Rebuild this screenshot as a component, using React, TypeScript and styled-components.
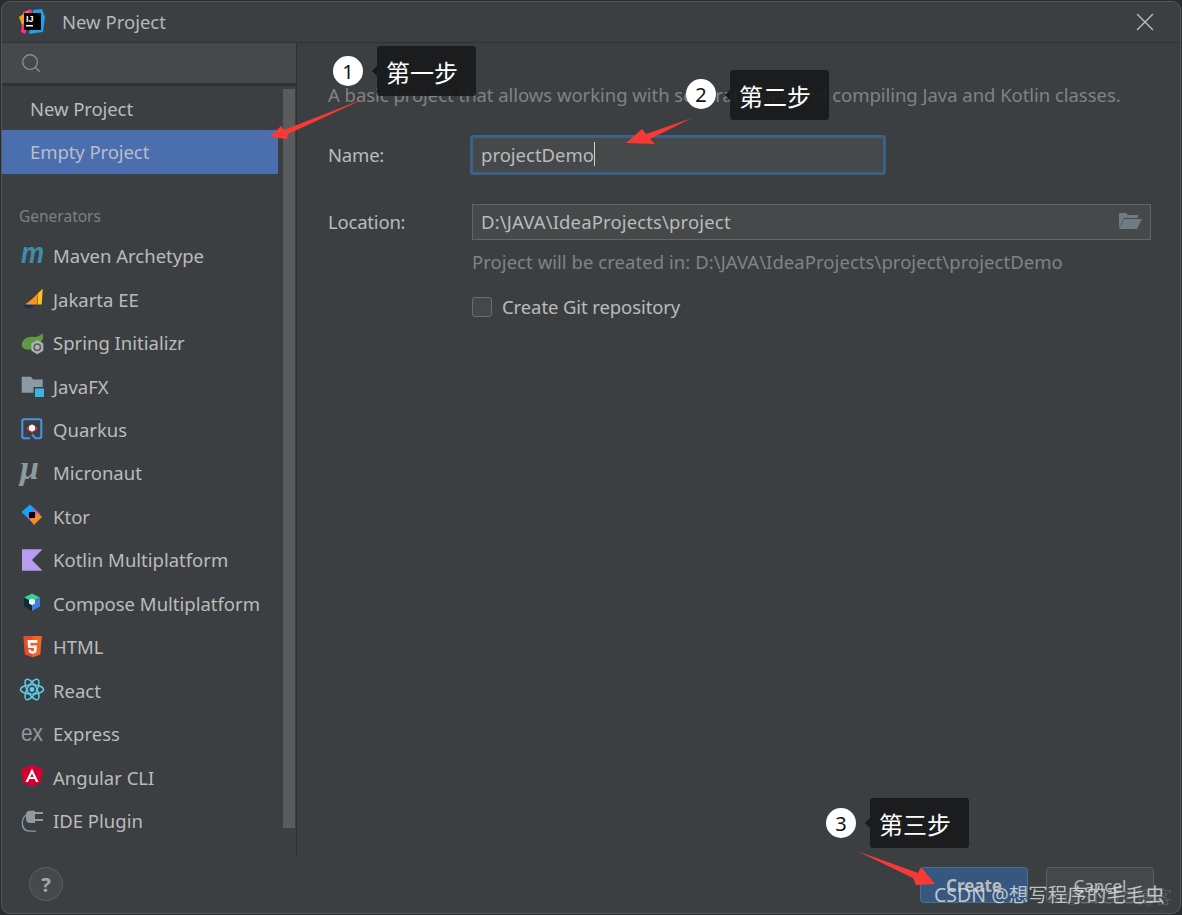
import React from "react";
import styled, { createGlobalStyle } from "styled-components";
import { X, Search } from "lucide-react";

const GlobalStyle = createGlobalStyle`
  html, body {
    margin: 0;
    padding: 0;
    width: 1182px;
    height: 915px;
    overflow: hidden;
    background: #2b2c2e;
  }
  * { box-sizing: border-box; }
`;

const FONT = `"Noto Sans", "Open Sans", "Noto Sans CJK SC", sans-serif`;

const Page = styled.div`
  position: relative;
  width: 1182px;
  height: 915px;
  padding: 2px;
  font-family: ${FONT};
  font-size: 18.5px;
  color: #bbbbbb;
`;

const Dialog = styled.div`
  width: 1178px;
  height: 911px;
  display: flex;
  flex-direction: column;
  background: #3c3f41;
  border-radius: 8px;
  box-shadow: 0 0 0 1px #55585a;
  overflow: hidden;
`;

const TitleBar = styled.header`
  height: 41px;
  flex: none;
  display: flex;
  align-items: center;
  padding: 0 20px 0 17px;
  gap: 17px;
  border-bottom: 1px solid #323232;
`;

const Title = styled.div`
  flex: 1;
  padding-bottom: 2px;
  color: #b5b7b8;
`;

const CloseButton = styled.div`
  display: flex;
  color: #bdbfc0;
`;

const Body = styled.div`
  flex: 1;
  min-height: 0;
  display: flex;
`;

const Sidebar = styled.aside`
  width: 295px;
  height: 813px;
  flex: none;
  display: flex;
  flex-direction: column;
  border-right: 1px solid #323232;
`;

const SearchBar = styled.div`
  height: 43px;
  flex: none;
  display: flex;
  align-items: center;
  padding-left: 18px;
  background: #45494a;
  border-bottom: 3px solid #323232;
  color: #8a8d8f;
`;

const ListArea = styled.div`
  position: relative;
  flex: 1;
  padding-top: 0.5px;
  padding-right: 18px;
`;

const Scrollbar = styled.div`
  position: absolute;
  top: 3px;
  right: 1px;
  width: 12px;
  height: 739px;
  background: #595b5d;
`;

const TemplateRow = styled.div<{ $active?: boolean }>`
  height: 43.5px;
  display: flex;
  align-items: center;
  padding-left: 28px;
  letter-spacing: -0.08px;
  background: ${(p) => (p.$active ? "#4b6eaf" : "transparent")};
  color: ${(p) => (p.$active ? "#b9bec6" : "#bbbbbb")};
`;

const GroupLabel = styled.div`
  height: 15px;
  margin: 35px 0 10.5px 17px;
  display: flex;
  align-items: center;
  font-size: 15.5px;
  color: #7d8082;
`;

const GeneratorRow = styled.div`
  height: 43.46px;
  display: flex;
  align-items: center;
  gap: 8px;
  padding-left: 19px;
`;

const IconSlot = styled.svg`
  width: 24px;
  height: 24px;
  flex: none;
  overflow: visible;
`;

const Main = styled.main`
  flex: 1;
  padding: 0 29px 0 31px;
`;

const Description = styled.p`
  margin: 39px 0 0;
  height: 26px;
  line-height: 26px;
  letter-spacing: -0.04px;
  white-space: nowrap;
  color: #808385;
`;

const FormRow = styled.div<{ $top: number }>`
  display: flex;
  align-items: center;
  margin-top: ${(p) => p.$top}px;
`;

const Label = styled.label`
  width: 142px;
  flex: none;
  padding-bottom: 2px;
  letter-spacing: -0.2px;
`;

const NameInput = styled.div`
  width: 416px;
  height: 40px;
  display: flex;
  align-items: center;
  padding: 0 0 2px 8px;
  background: #45494a;
  border: 3px solid #3d6185;
  border-radius: 3px;
`;

const Caret = styled.span`
  width: 1px;
  height: 24px;
  background: #d0d0d0;
`;

const LocationInput = styled.div`
  flex: 1;
  height: 36px;
  margin-left: 2px;
  display: flex;
  align-items: center;
  justify-content: space-between;
  padding: 0 8px 2px 8px;
  background: #45494a;
  border: 1px solid #646464;
  letter-spacing: 0.14px;
`;

const Hint = styled.div`
  margin: 9px 0 0 144px;
  height: 26px;
  line-height: 26px;
  letter-spacing: 0.05px;
  white-space: nowrap;
  color: #808385;
`;

const CheckRow = styled.div`
  margin: 19px 0 0 144px;
  display: flex;
  align-items: center;
  gap: 10px;
  letter-spacing: -0.1px;
`;

const CheckBox = styled.span`
  width: 20px;
  height: 20px;
  background: #43494a;
  border: 1px solid #6b6b6b;
  border-radius: 3px;
`;

const Footer = styled.footer`
  height: 57px;
  flex: none;
  display: flex;
  align-items: flex-start;
  padding: 11px 26px 0 27px;
  gap: 18px;
`;

const HelpButton = styled.div`
  width: 34px;
  height: 34px;
  margin-right: auto;
  display: flex;
  align-items: center;
  justify-content: center;
  border-radius: 50%;
  background: #46494b;
  border: 1px solid #5e6060;
  color: #a4a6a8;
  font-weight: 700;
  font-size: 20px;
`;

const ActionButton = styled.button<{ $primary?: boolean }>`
  width: 108px;
  height: 36px;
  padding: 0;
  font-family: ${FONT};
  font-size: 17px;
  font-weight: ${(p) => (p.$primary ? 700 : 400)};
  color: #bbbbbb;
  background: ${(p) => (p.$primary ? "#365880" : "#45484a")};
  border: 1px solid ${(p) => (p.$primary ? "#4c708c" : "#5e6060")};
  border-radius: 4px;
`;

const Callout = styled.div<{ $x: number; $y: number }>`
  position: absolute;
  left: ${(p) => p.$x}px;
  top: ${(p) => p.$y}px;
  width: 99px;
  height: 50px;
  display: flex;
  align-items: center;
  padding-left: 9px;
  background: rgba(24, 25, 27, 0.92);
  border-radius: 3px;
  font-family: "Noto Sans CJK SC", sans-serif;
  font-size: 24px;
  color: #ffffff;

  &::before {
    content: "";
    position: absolute;
    left: -5px;
    top: 20px;
    width: 5px;
    height: 10px;
    background: #18191b;
    clip-path: polygon(100% 0, 0 50%, 100% 100%);
  }
`;

const StepDot = styled.div<{ $x: number; $y: number }>`
  position: absolute;
  left: ${(p) => p.$x}px;
  top: ${(p) => p.$y}px;
  width: 30px;
  height: 30px;
  display: flex;
  align-items: center;
  justify-content: center;
  border-radius: 50%;
  background: #ffffff;
  color: #111111;
  font-size: 20px;
`;

const Overlay = styled.svg`
  position: absolute;
  left: 0;
  top: 0;
  pointer-events: none;
`;

const Watermark = styled.div`
  position: absolute;
  left: 934px;
  top: 882px;
  font-family: "Noto Sans", "Noto Sans CJK SC", sans-serif;
  font-size: 19.5px;
  line-height: 26px;
  white-space: nowrap;
  color: rgba(215, 218, 220, 0.85);
`;

const GhostMark = styled.div`
  position: absolute;
  right: 10px;
  top: 884px;
  font-family: "Noto Sans", "Noto Sans CJK SC", sans-serif;
  font-size: 18px;
  line-height: 26px;
  white-space: nowrap;
  color: rgba(215, 218, 220, 0.18);
`;

const IdeaLogo = () => (
  <svg width="26" height="26" viewBox="0 0 26 26">
    <path d="M4 3 L12 0 L14 6 L6 25 L2 23z" fill="#fc2f8a" />
    <path d="M0 8 L9 2 L12 8 L3 16z" fill="#f9a01b" />
    <path d="M14 1 L23 0 L26 8 L24 23 L10 25z" fill="#1fa0e8" />
    <rect x="5" y="4" width="17" height="17" fill="#000" />
    <text x="7" y="13" fontFamily="Liberation Sans" fontSize="9" fontWeight="700" fill="#fff">IJ</text>
    <rect x="7" y="16" width="7" height="1.5" fill="#fff" />
  </svg>
);

const Maven = () => (
  <IconSlot viewBox="0 0 24 24">
    <text x="0" y="18.7" fontFamily="Liberation Sans" fontStyle="italic" fontWeight="700" fontSize="29" fill="#3f8cab" textLength="23" lengthAdjust="spacingAndGlyphs">m</text>
  </IconSlot>
);
const Jakarta = () => (
  <IconSlot viewBox="0 0 24 24">
    <path d="M4 17.5 C9 14 14 10 17.3 5.8 L15.7 17.5z" fill="#f7941d" />
    <path d="M17.3 5.8 L21.7 1.8 L20.7 17.5 L16.4 17.5z" fill="#fcc419" />
    <path d="M1.7 17.5 L15.7 18.5 L5.7 21.5z" fill="#1b2a6b" />
  </IconSlot>
);
const Spring = () => (
  <IconSlot viewBox="0 0 24 24">
    <path d="M0.7 14 C1 8 7 5 13 6 C16 6 19 5 21.7 2.3 C23 8 21 12 15 15 C9 20 2 20 0.7 14z" fill="#5f9a45" />
    <path d="M16.3 9 L22.3 12.6 L22.3 19.7 L16.3 23.2 L10.3 19.7 L10.3 12.6z" fill="#afb1b3" />
    <circle cx="16.3" cy="16.2" r="3.2" fill="none" stroke="#5b5e60" strokeWidth="1.5" />
  </IconSlot>
);
const JavaFx = () => (
  <IconSlot viewBox="0 0 24 24">
    <path d="M0.7 2.8 L10 2.8 L12 5.5 L21.7 5.5 L21.7 18.8 L0.7 18.8z" fill="#8b9aa3" />
    <rect x="12.5" y="13" width="11" height="10.5" fill="#3c3f41" />
    <rect x="14" y="14.5" width="9" height="8.5" fill="#3eb4e0" />
  </IconSlot>
);
const Quarkus = () => (
  <IconSlot viewBox="0 0 24 24">
    <path d="M9 20.3 L3 20.3 Q1.3 20.3 1.3 18.6 L1.3 3 Q1.3 1.3 3 1.3 L18.6 1.3 Q20.3 1.3 20.3 3 L20.3 18.6 Q20.3 20.3 18.6 20.3 L14.5 20.3 L11 16.5" fill="none" stroke="#4695eb" strokeWidth="2" />
    <path d="M5 10.5 L11 6 L17 10.5 L11 15z" fill="#e8344a" />
    <path d="M8 8 L11 6.5 L14 8 L14 12 L11 13.5 L8 12z" fill="#ffffff" />
  </IconSlot>
);
const Micronaut = () => (
  <IconSlot viewBox="0 0 24 24">
    <text x="-1" y="18" fontFamily="Liberation Serif" fontStyle="italic" fontWeight="700" fontSize="34" fill="#8c9aa2">μ</text>
  </IconSlot>
);
const Ktor = () => (
  <IconSlot viewBox="0 0 24 24">
    <path d="M0.5 8 L9 0.5 L14 5 L5.5 13z" fill="#0ea5ff" />
    <path d="M5.5 13 L14 5 L19 10 L10 17z" fill="#c75bd0" />
    <path d="M9 16 L17 9 L21 13 L13 21z" fill="#f58a2c" />
    <rect x="8" y="8" width="6" height="6" fill="#000" />
  </IconSlot>
);
const Kotlin = () => (
  <IconSlot viewBox="0 0 24 24">
    <path d="M1 1.3 L21.5 1.3 L11 12 L21.5 22.7 L1 22.7z" fill="#b99bf0" />
  </IconSlot>
);
const Compose = () => (
  <IconSlot viewBox="0 0 24 24">
    <path d="M11 2.5 L19 6.5 L11 11 L3 6.5z" fill="#3ecf8e" />
    <path d="M3 6.5 L11 11 L11 20 L3 15.5z" fill="#0d2b3a" />
    <path d="M19 6.5 L11 11 L11 20 L19 15.5z" fill="#3f7fe0" />
    <path d="M11 7.5 L14 9.2 L14 12.5 L11 14.2 L8 12.5 L8 9.2z" fill="#e8f4f4" />
  </IconSlot>
);
const Html5 = () => (
  <IconSlot viewBox="0 0 24 24">
    <path d="M2.3 1 L20.7 1 L19.2 19.5 L11.5 22.3 L3.8 19.5z" fill="#e44d26" />
    <path d="M11.5 1 L20.7 1 L19.2 19.5 L11.5 22.3z" fill="#f16529" />
    <path d="M6.5 5 L16.5 5 L16.2 8 L9.5 8 L9.7 10.5 L16 10.5 L15.3 17.5 L11.5 19 L7.7 17.5 L7.5 14.5 L10 14.5 L10.1 15.7 L11.5 16.2 L12.9 15.7 L13.1 13 L7 13z" fill="#f4f4f4" />
  </IconSlot>
);
const ReactLogo = () => (
  <IconSlot viewBox="0 0 24 24">
    <g fill="none" stroke="#5fd0ee" strokeWidth="1.4">
      <ellipse cx="11" cy="11.5" rx="11.5" ry="4.6" />
      <ellipse cx="11" cy="11.5" rx="11.5" ry="4.6" transform="rotate(60 11 11.5)" />
      <ellipse cx="11" cy="11.5" rx="11.5" ry="4.6" transform="rotate(120 11 11.5)" />
    </g>
    <circle cx="11" cy="11.5" r="2.4" fill="#5fd0ee" />
  </IconSlot>
);
const Express = () => (
  <IconSlot viewBox="0 0 24 24">
    <text x="0" y="18.7" fontFamily="Liberation Sans" fontSize="24" fill="#8c9aa2" textLength="22" lengthAdjust="spacingAndGlyphs">ex</text>
  </IconSlot>
);
const Angular = () => (
  <IconSlot viewBox="0 0 24 24">
    <path d="M11 0 L21.8 3.8 L20 17 L11 22 L2 17 L0.5 3.8z" fill="#d6002f" />
    <path d="M11 3.5 L17.5 17 L15 17 L13.7 14 L8.3 14 L7 17 L4.5 17z M11 8.5 L9.4 12 L12.6 12z" fill="#ffffff" fillRule="evenodd" />
  </IconSlot>
);
const IdePlugin = () => (
  <IconSlot viewBox="0 0 24 24">
    <path d="M9 1.7 L14 1.7 L14 14 L9 14 Q5 14 5 10 L5 6 Q5 1.7 9 1.7z" fill="#8c9aa2" />
    <rect x="14" y="3" width="8" height="2" fill="#8c9aa2" />
    <rect x="14" y="10" width="8" height="2" fill="#8c9aa2" />
    <path d="M5 6 C2.5 8 1.3 11 1.3 14 C1.3 20 5 22.2 9 22.2 L15 22.2" fill="none" stroke="#8c9aa2" strokeWidth="1.3" />
  </IconSlot>
);

const FolderOpen = () => (
  <svg width="24" height="20" viewBox="0 0 24 20">
    <path d="M1 2 L8 2 L10 4 L20 4 L20 7 L6 7 L1 17z" fill="#6f7b81" />
    <path d="M6 8 L24 8 L19 18 L1 18z" fill="#6f7b81" />
  </svg>
);

const generators: { name: string; Icon: React.FC }[] = [
  { name: "Maven Archetype", Icon: Maven },
  { name: "Jakarta EE", Icon: Jakarta },
  { name: "Spring Initializr", Icon: Spring },
  { name: "JavaFX", Icon: JavaFx },
  { name: "Quarkus", Icon: Quarkus },
  { name: "Micronaut", Icon: Micronaut },
  { name: "Ktor", Icon: Ktor },
  { name: "Kotlin Multiplatform", Icon: Kotlin },
  { name: "Compose Multiplatform", Icon: Compose },
  { name: "HTML", Icon: Html5 },
  { name: "React", Icon: ReactLogo },
  { name: "Express", Icon: Express },
  { name: "Angular CLI", Icon: Angular },
  { name: "IDE Plugin", Icon: IdePlugin },
];

const arrows = [
  "270,137 281,126 284,130 366,98 288,134 287,139",
  "626,143 642,129 646,134 692,118 650,139 655,144",
  "935,884 921,867 918,873 857,851 913,878 916,885",
];

export default function App() {
  return (
    <Page>
      <GlobalStyle />
      <Dialog>
        <TitleBar>
          <IdeaLogo />
          <Title>New Project</Title>
          <CloseButton>
            <X size={30} strokeWidth={1.1} />
          </CloseButton>
        </TitleBar>
        <Body>
          <Sidebar>
            <SearchBar>
              <Search size={22} strokeWidth={1.5} />
            </SearchBar>
            <ListArea>
              <TemplateRow>New Project</TemplateRow>
              <TemplateRow $active>Empty Project</TemplateRow>
              <GroupLabel>Generators</GroupLabel>
              {generators.map(({ name, Icon }) => (
                <GeneratorRow key={name}>
                  <Icon />
                  {name}
                </GeneratorRow>
              ))}
              <Scrollbar />
            </ListArea>
          </Sidebar>
          <Main>
            <Description>
              A basic project that allows working with separate files and compiling Java and Kotlin classes.
            </Description>
            <FormRow $top={27}>
              <Label>Name:</Label>
              <NameInput>
                projectDemo
                <Caret />
              </NameInput>
            </FormRow>
            <FormRow $top={29}>
              <Label>Location:</Label>
              <LocationInput>
                D:\JAVA\IdeaProjects\project
                <FolderOpen />
              </LocationInput>
            </FormRow>
            <Hint>Project will be created in: D:\JAVA\IdeaProjects\project\projectDemo</Hint>
            <CheckRow>
              <CheckBox />
              Create Git repository
            </CheckRow>
          </Main>
        </Body>
        <Footer>
          <HelpButton>?</HelpButton>
          <ActionButton $primary>Create</ActionButton>
          <ActionButton>Cancel</ActionButton>
        </Footer>
      </Dialog>

      <Overlay width="1182" height="915" viewBox="0 0 1182 915">
        {arrows.map((points) => (
          <polygon key={points} points={points} fill="#f83a36" />
        ))}
      </Overlay>
      <StepDot $x={333} $y={56}>1</StepDot>
      <Callout $x={377} $y={46}>第一步</Callout>
      <StepDot $x={686} $y={79}>2</StepDot>
      <Callout $x={730} $y={70}>第二步</Callout>
      <StepDot $x={826} $y={808}>3</StepDot>
      <Callout $x={870} $y={798}>第三步</Callout>
      <GhostMark>@51CTO博客</GhostMark>
      <Watermark>CSDN @想写程序的毛毛虫</Watermark>
    </Page>
  );
}
